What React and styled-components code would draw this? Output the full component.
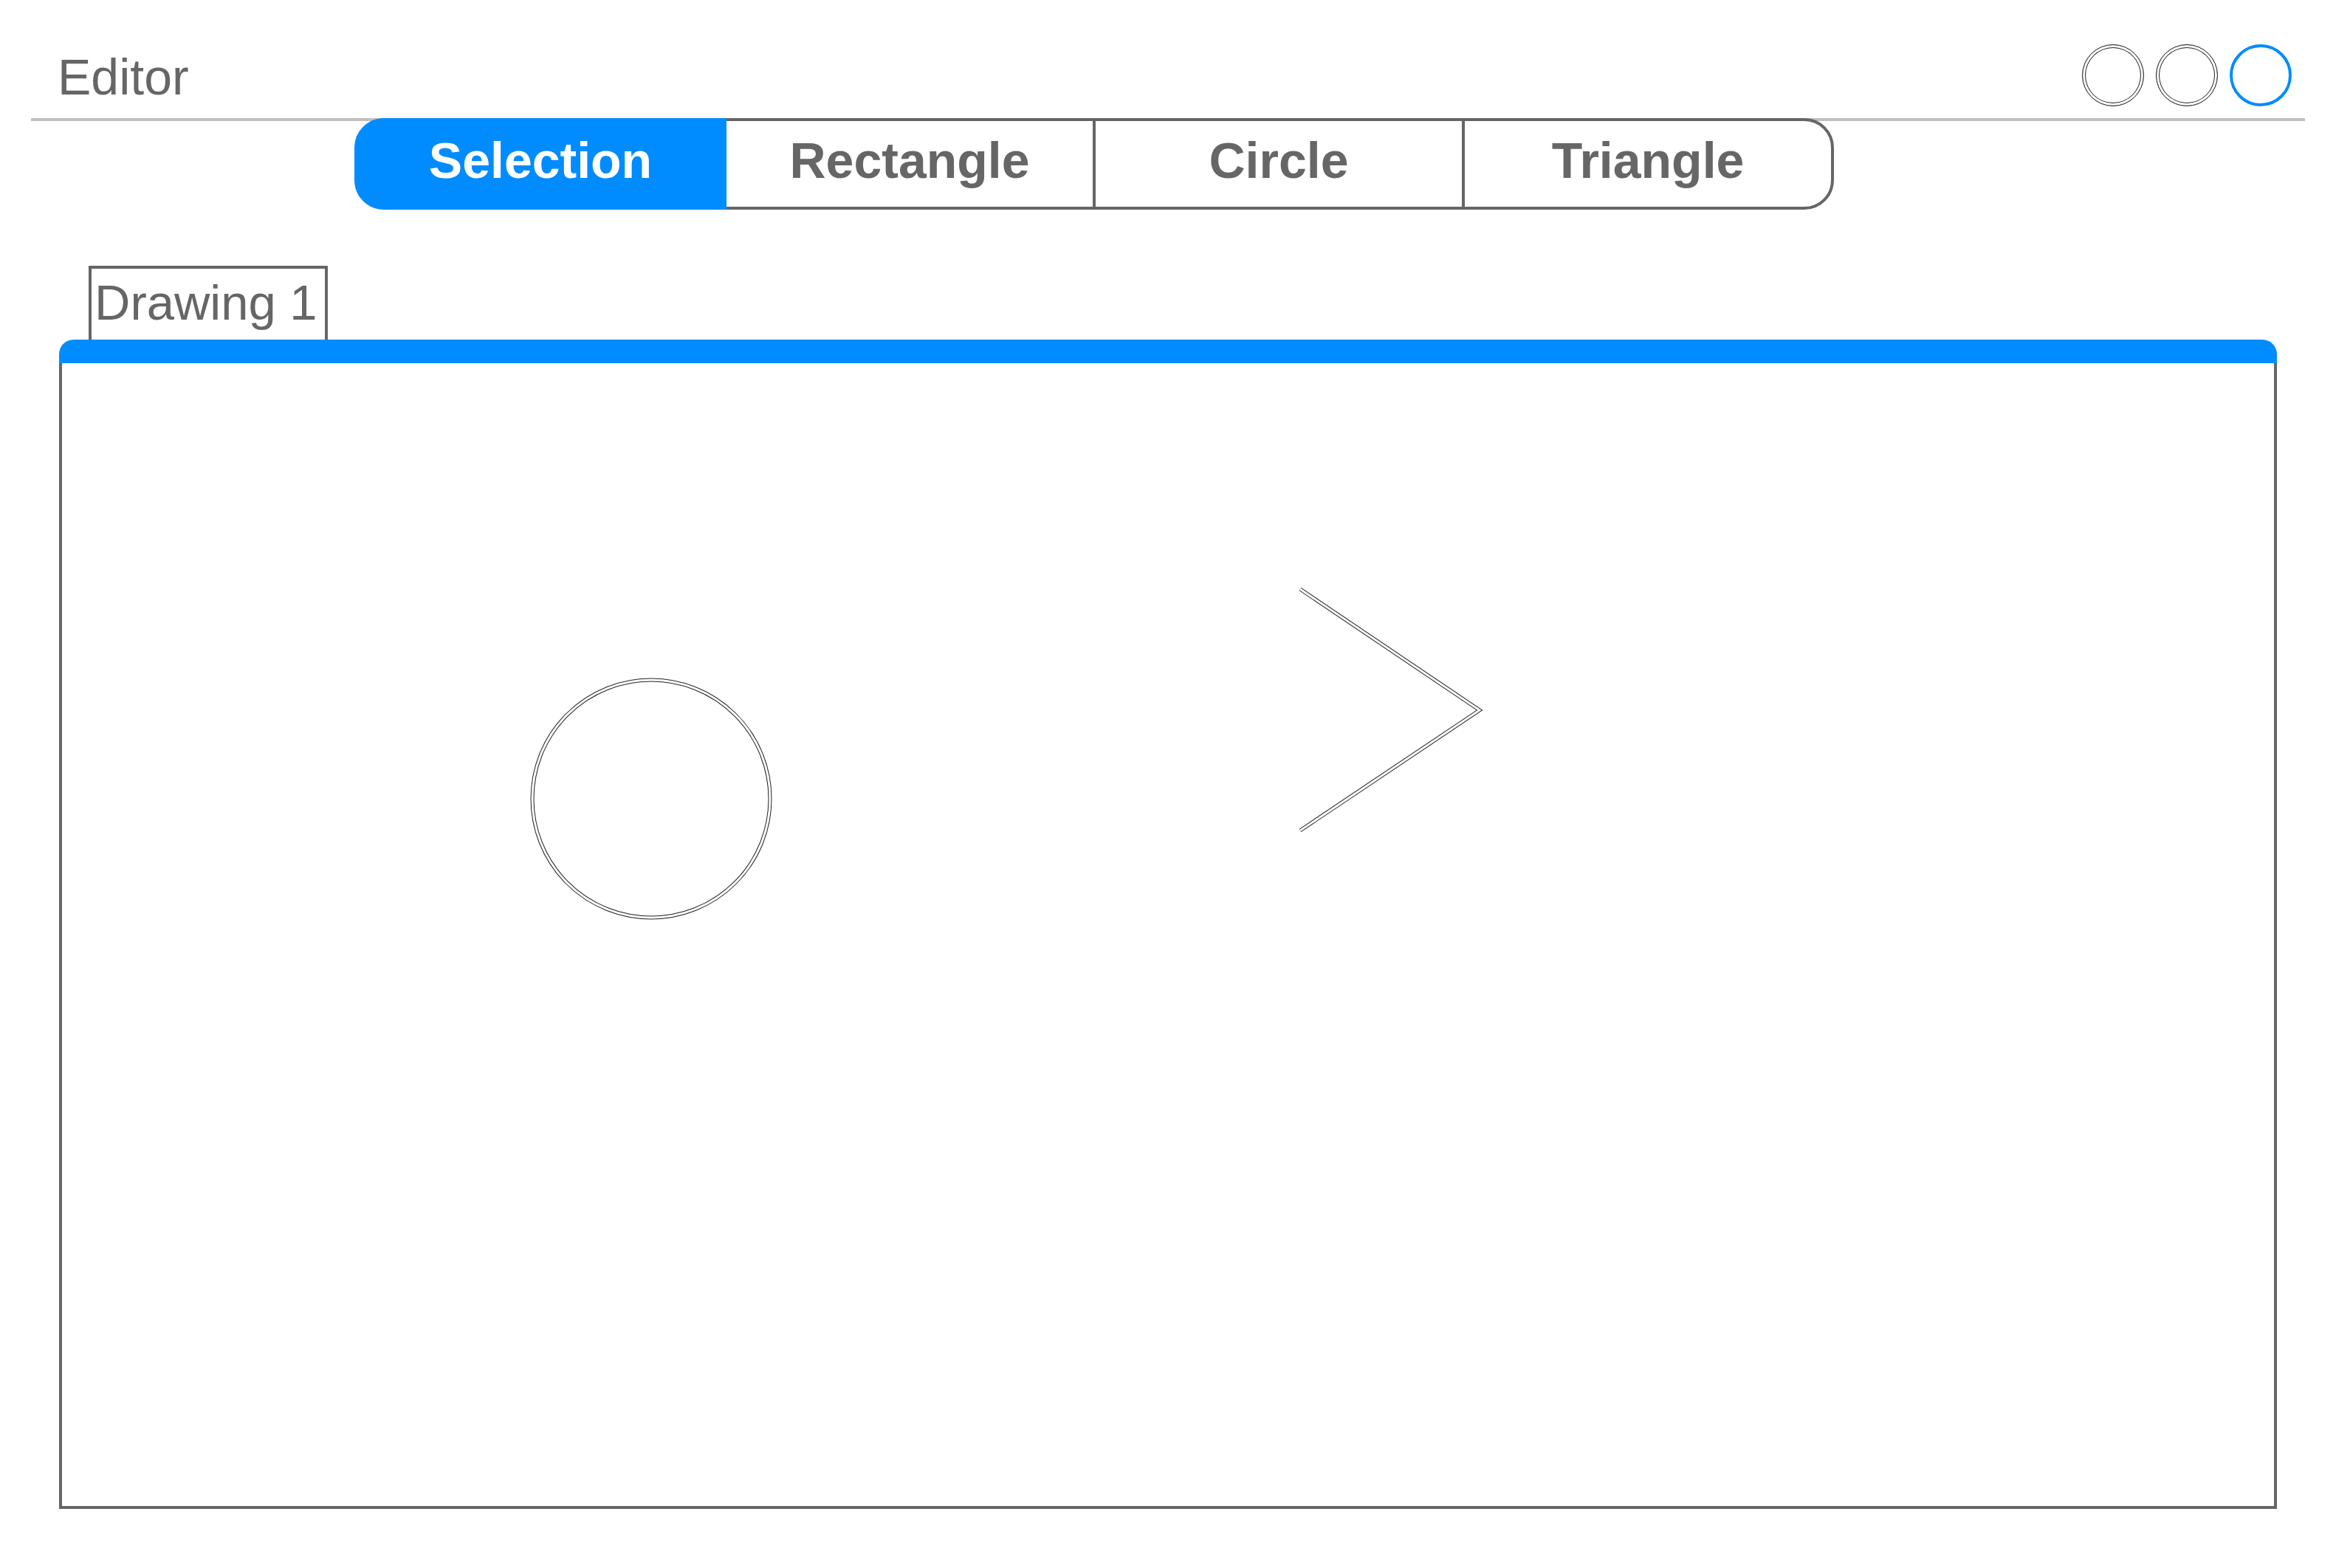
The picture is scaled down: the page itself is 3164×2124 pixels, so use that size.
import React, { useState } from 'react';
import styled, { createGlobalStyle } from 'styled-components';

const GlobalStyle = createGlobalStyle`
  html, body {
    margin: 0;
    padding: 0;
    background: #ffffff;
  }
  body {
    font-family: "Liberation Sans", Arial, sans-serif;
    color: #666666;
  }
  * {
    box-sizing: border-box;
  }
`;

const BLUE = '#008cff';
const GREY = '#666666';

const tools = ['Selection', 'Rectangle', 'Circle', 'Triangle'];

const Editor = () => {
  const [tool, setTool] = useState('Selection');

  return (
    <Page>
      <GlobalStyle />
      <Header>
        <Title>Editor</Title>
        <WindowControls>
          <ControlDot />
          <ControlDot />
          <ControlDot $active />
        </WindowControls>
      </Header>

      <Toolbar>
        {tools.map((name) => (
          <ToolButton key={name} $active={tool === name} onClick={() => setTool(name)}>
            {name}
          </ToolButton>
        ))}
      </Toolbar>

      <TabRow>
        <Tab>Drawing 1</Tab>
      </TabRow>

      <Canvas>
        <CanvasHeader />
        <CanvasBody>
          <Shapes width="2996" height="1548" viewBox="0 0 2996 1548">
            <g fill="none" strokeLinejoin="miter">
              <circle cx="798" cy="590" r="161" stroke="#222" strokeWidth="5" fill="#fff" />
              <circle cx="798" cy="590" r="161" stroke="#ffffff" strokeWidth="3" />
              <polyline points="1677,306 1920,470 1677,633" stroke="#222" strokeWidth="5" />
              <polyline points="1677,306 1920,470 1677,633" stroke="#ffffff" strokeWidth="3" />
            </g>
          </Shapes>
        </CanvasBody>
      </Canvas>
    </Page>
  );
};

export default Editor;

const Page = styled.div`
  width: 3164px;
  min-height: 2124px;
  padding-bottom: 80px;
`;

const Header = styled.header`
  display: flex;
  align-items: flex-start;
  margin: 0 42px;
  height: 164px;
  border-bottom: 4px solid #c0c0c0;
`;

const Title = styled.h1`
  margin: 70px 0 0;
  padding-left: 36px;
  font-size: 68px;
  line-height: 68px;
  font-weight: normal;
  color: ${GREY};
`;

const WindowControls = styled.div`
  display: flex;
  gap: 16px;
  margin: 60px 18px 0 auto;
`;

const ControlDot = styled.span`
  display: block;
  width: 84px;
  height: 84px;
  border-radius: 50%;
  border: ${(p) => (p.$active ? `4px solid ${BLUE}` : '1px solid #222')};
  box-shadow: ${(p) => (p.$active ? 'none' : 'inset 0 0 0 3px #fff, inset 0 0 0 4px #222')};
`;

const Toolbar = styled.nav`
  display: flex;
  margin: -4px 0 0 480px;
  position: relative;
`;

const ToolButton = styled.button`
  flex: 0 0 504px;
  height: 124px;
  margin: 0 0 0 -4px;
  padding: 0 0 11px;
  display: flex;
  align-items: center;
  justify-content: center;
  border: 4px solid ${(p) => (p.$active ? BLUE : GREY)};
  background: ${(p) => (p.$active ? BLUE : '#fff')};
  color: ${(p) => (p.$active ? '#fff' : GREY)};
  position: relative;
  z-index: ${(p) => (p.$active ? 1 : 0)};
  font-family: "Liberation Sans", Arial, sans-serif;
  font-size: 68px;
  line-height: 68px;
  font-weight: bold;
  cursor: pointer;

  &:first-child {
    margin-left: 0;
    border-radius: 40px 0 0 40px;
  }

  &:last-child {
    border-radius: 0 40px 40px 0;
  }
`;

const TabRow = styled.div`
  display: flex;
  margin: 76px 0 0 120px;
`;

const Tab = styled.div`
  width: 324px;
  height: 100px;
  padding: 12px 4px 0;
  border: 4px solid ${GREY};
  border-bottom: none;
  font-size: 67px;
  line-height: 67px;
  color: ${GREY};
  white-space: nowrap;
`;

const Canvas = styled.section`
  margin-left: 80px;
  width: 3004px;
`;

const CanvasHeader = styled.div`
  height: 32px;
  background: ${BLUE};
  border-radius: 20px 20px 0 0;
`;

const CanvasBody = styled.div`
  position: relative;
  height: 1552px;
  border: 4px solid ${GREY};
  border-top: none;
  background: #fff;
`;

const Shapes = styled.svg`
  position: absolute;
  left: 0;
  top: 0;
  display: block;
`;
